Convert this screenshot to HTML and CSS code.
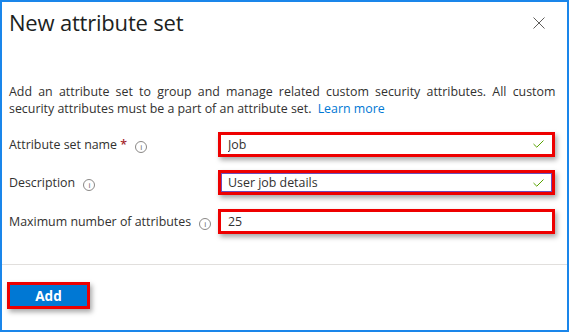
FILE: index.html
```html
<!DOCTYPE html>
<html lang="en">
<head>
  <meta charset="UTF-8">
  <meta name="viewport" content="width=device-width, initial-scale=1.0">
  <title>New attribute set</title>
  <link rel="stylesheet" href="styles.css">
</head>
<body>

  <div class="panel">
    <div class="panel-header">
      <h1>New attribute set</h1>
      <button class="close-btn" type="button" aria-label="Close">
        <svg width="12" height="12" viewBox="0 0 12 12"><path d="M0.5 0.5 L11.5 11.5 M11.5 0.5 L0.5 11.5" stroke="#605e5c" stroke-width="1" fill="none"/></svg>
      </button>
    </div>

    <div class="panel-body">
      <p class="intro"><span class="intro-first">Add an attribute set to group and manage related custom security attributes. All custom</span><br>security attributes must be a part of an attribute set. <a href="#" class="link">Learn more</a></p>

      <div class="field">
        <label for="setName">Attribute set name <span class="req">*</span> <span class="info">i</span></label>
        <div class="input-box marked">
          <input type="text" id="setName" value="Job">
          <svg class="check" width="11" height="8" viewBox="0 0 11 8"><path d="M0.5 4 L3.8 7.2 L10.5 0.5" stroke="#57a300" stroke-width="1" fill="none"/></svg>
        </div>
      </div>

      <div class="field">
        <label for="description">Description <span class="info">i</span></label>
        <div class="input-box marked focused">
          <input type="text" id="description" value="User job details">
          <svg class="check" width="11" height="8" viewBox="0 0 11 8"><path d="M0.5 4 L3.8 7.2 L10.5 0.5" stroke="#57a300" stroke-width="1" fill="none"/></svg>
        </div>
      </div>

      <div class="field">
        <label for="maxAttr">Maximum number of attributes <span class="info">i</span></label>
        <div class="input-box marked">
          <input type="text" id="maxAttr" value="25">
        </div>
      </div>
    </div>

    <div class="panel-footer">
      <button class="btn-primary marked" type="button">Add</button>
    </div>
  </div>

</body>
</html>
```

FILE: styles.css
```css
body {
  margin: 0;
  font-family: 'Open Sans', 'Noto Sans', sans-serif;
  color: #323130;
  background: #fff;
}

.panel {
  box-sizing: border-box;
  width: 569px;
  height: 332px;
  border: 2px solid #1a86ea;
  display: flex;
  flex-direction: column;
}

.panel-header {
  display: flex;
  justify-content: space-between;
  align-items: flex-start;
  padding: 4px 22px 0 7px;
}

h1 {
  margin: 0;
  font-size: 22px;
  font-weight: 500;
  letter-spacing: -0.2px;
  line-height: 32px;
  color: #201f1e;
}

.close-btn {
  border: none;
  background: none;
  padding: 0;
  margin-top: 11px;
  width: 12px;
  height: 12px;
  cursor: pointer;
}

.close-btn svg {
  display: block;
}

.panel-body {
  padding: 45px 12px 0 7px;
  flex: 1;
}

.intro {
  margin: 0 -10px 8px 0;
  font-size: 12.4px;
  line-height: 17px;
  white-space: nowrap;
}

.intro-first {
  word-spacing: 3px;
}

.link {
  color: #0078d4;
  text-decoration: none;
  padding-left: 3px;
}

.field {
  display: flex;
  align-items: center;
  height: 38.5px;
}

label {
  width: 209px;
  font-size: 12.4px;
}

.req {
  color: #a4262c;
  font-weight: 600;
}

.info {
  display: inline-block;
  box-sizing: border-box;
  width: 12px;
  height: 12px;
  margin-left: 5px;
  border: 1px solid #8a8886;
  border-radius: 50%;
  font-size: 8px;
  line-height: 10px;
  text-align: center;
  color: #605e5c;
  vertical-align: -1px;
}

.input-box {
  flex: 1;
  display: flex;
  align-items: center;
  height: 19px;
  padding: 0 8px 0 7px;
  background: #fff;
}

.input-box input {
  flex: 1;
  border: none;
  outline: none;
  padding: 0;
  font-family: inherit;
  font-size: 12.4px;
  color: #323130;
  background: transparent;
}

.marked {
  border: 3px solid #ee0000;
  box-shadow: 2px 3px 5px rgba(0, 0, 0, 0.35);
}

.focused {
  box-shadow: inset 0 0 0 1px #6b4fbb, 2px 3px 5px rgba(0, 0, 0, 0.35);
}

.check {
  display: block;
}

.panel-footer {
  border-top: 1px solid #e1dfdd;
  padding: 17px 0 0 5px;
  height: 48px;
}

.btn-primary {
  width: 83px;
  height: 27px;
  background: #0078d4;
  color: #fff;
  font-family: inherit;
  font-size: 13.5px;
  font-weight: 700;
  cursor: pointer;
}
```
